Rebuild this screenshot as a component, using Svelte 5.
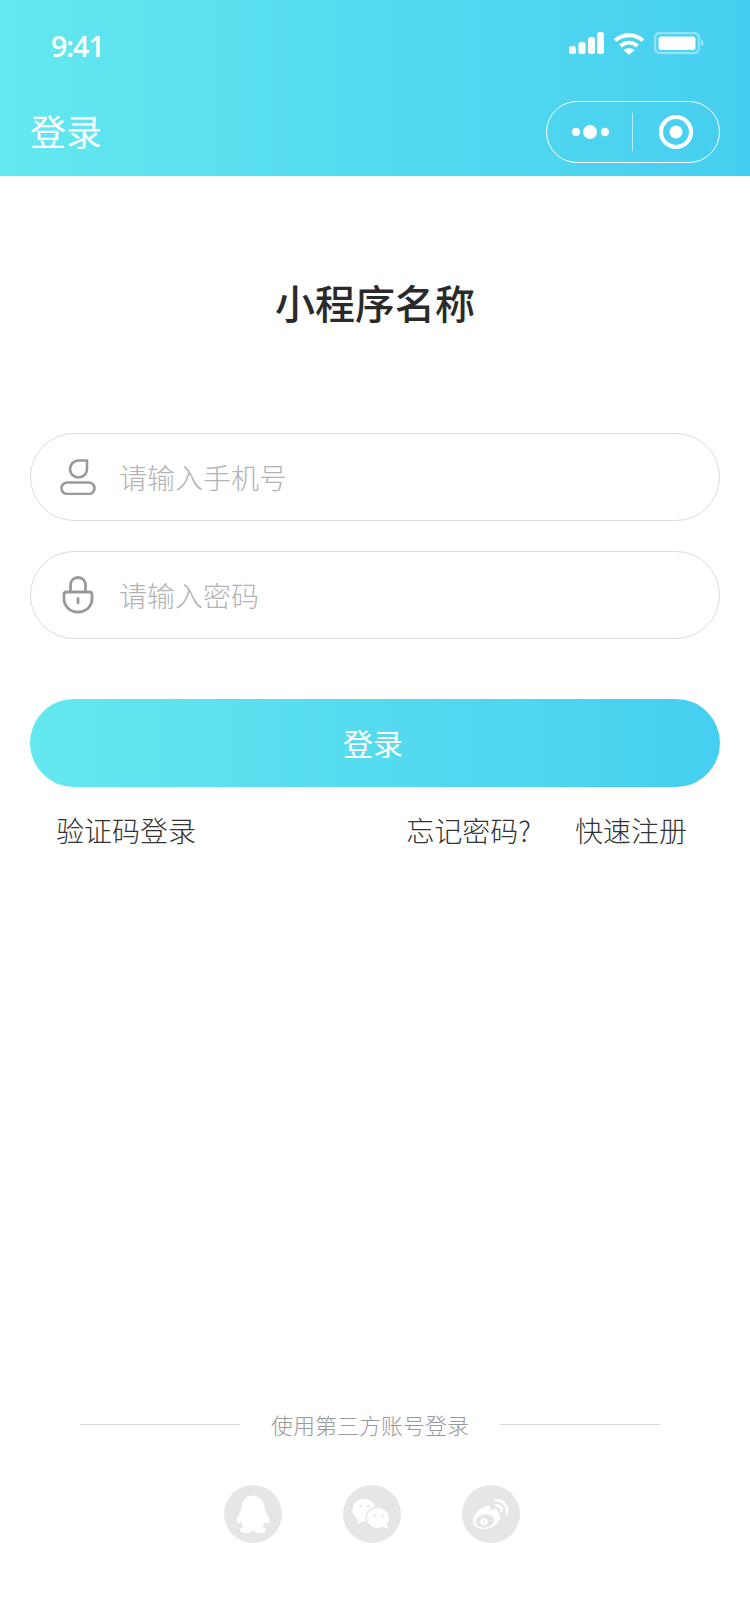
<script>
	let phone = $state('');
	let password = $state('');
</script>

<div class="page">
	<header class="top">
		<div class="status">
			<span class="time">9:41</span>
			<div class="status-icons">
				<svg width="36" height="24" viewBox="0 0 36 24" fill="#fff">
					<rect x="0" y="14" width="7" height="8" rx="2.500" />
					<rect x="9.500" y="10" width="7" height="12" rx="2.500" />
					<rect x="19" y="5" width="7" height="17" rx="2.500" />
					<rect x="28" y="0" width="7" height="22" rx="2.500" />
				</svg>
				<svg width="32" height="24" viewBox="0 0 32 24" fill="none" stroke="#fff" stroke-width="3.800">
					<path d="M2 8.500 C10 1.500 22 1.500 30 8.500" />
					<path d="M7.500 14 C12.500 9.500 19.500 9.500 24.500 14" />
					<path d="M16 23 L10.500 18 C14 15.500 18 15.500 21.500 18 Z" fill="#fff" stroke="none" />
				</svg>
				<svg class="battery" width="50" height="24" viewBox="0 0 50 24">
					<rect x="1" y="1" width="44" height="20" rx="5" fill="none" stroke="#fff" stroke-opacity=".4" stroke-width="2.400" />
					<rect x="4.500" y="4.500" width="37" height="13.500" rx="2.500" fill="#fff" />
					<path d="M47 8 C49 8.500 49.500 9.500 49.500 11 C49.500 12.500 49 13.500 47 14 Z" fill="#fff" fill-opacity=".5" />
				</svg>
			</div>
		</div>
		<div class="nav">
			<span class="nav-title">登录</span>
			<div class="capsule">
				<div class="capsule-side">
					<svg width="40" height="16" viewBox="0 0 40 16" fill="#fff">
						<circle cx="5" cy="8" r="4.200" />
						<circle cx="19" cy="8" r="7" />
						<circle cx="34" cy="8" r="4.200" />
					</svg>
				</div>
				<span class="capsule-line"></span>
				<div class="capsule-side">
					<svg width="36" height="36" viewBox="0 0 36 36">
						<circle cx="18" cy="18" r="15" fill="none" stroke="#fff" stroke-width="4.200" />
						<circle cx="18" cy="18" r="6.500" fill="#fff" />
					</svg>
				</div>
			</div>
		</div>
	</header>

	<main class="content">
		<h1>小程序名称</h1>

		<label class="field">
			<svg width="36" height="36" viewBox="0 0 36 36" fill="none" stroke="#999" stroke-width="2.600">
				<path d="M27 1.500 V10 A8.500 8.500 0 1 1 18.500 1.500 Z" />
				<rect x="1.500" y="23.500" width="33" height="11.500" rx="5.750" />
			</svg>
			<input type="text" placeholder="请输入手机号" bind:value={phone} />
		</label>

		<label class="field second">
			<svg width="36" height="38" viewBox="0 0 36 38" fill="none" stroke="#999" stroke-width="2.800">
				<path d="M10.500 16 V9.500 C10.500 4.500 13.500 1.500 18 1.500 C22.500 1.500 25.500 4.500 25.500 9.500 V16" />
				<path d="M6.500 16 H29.500 C31 16 32 17 32 18.500 V22.500 C32 30.500 26 36 18 36 C10 36 4 30.500 4 22.500 V18.500 C4 17 5 16 6.500 16 Z" />
				<path d="M18 22.500 V27" stroke-linecap="round" />
			</svg>
			<input type="password" placeholder="请输入密码" bind:value={password} />
		</label>

		<button class="submit">登录</button>

		<div class="links">
			<a href="#code">验证码登录</a>
			<div class="links-right">
				<a href="#forget">忘记密码?</a>
				<a href="#register">快速注册</a>
			</div>
		</div>
	</main>

	<footer class="other">
		<div class="other-title">
			<span class="rule"></span>
			<span>使用第三方账号登录</span>
			<span class="rule"></span>
		</div>
		<div class="socials">
			<svg class="social" width="58" height="58" viewBox="0 0 58 58">
				<circle cx="29" cy="29" r="29" fill="#e6e6e6" />
				<path fill="#fff" d="M29 10.500 C36 10.500 40 16 40.500 23 C41 27 44 30 45 34 C45.500 36.500 45 38.500 44 38.500 C43 38.500 42 37.500 41 36 C40.500 38 40 40 38.500 41.500 C40.500 42.500 42 43.500 42 45 C42 47.500 37 48.500 34 48 C31.500 47.500 30 46.500 29 45.500 C28 46.500 26.500 47.500 24 48 C21 48.500 16 47.500 16 45 C16 43.500 17.500 42.500 19.500 41.500 C18 40 17.500 38 17 36 C16 37.500 15 38.500 14 38.500 C13 38.500 12.500 36.500 13 34 C14 30 17 27 17.500 23 C18 16 22 10.500 29 10.500 Z" />
			</svg>
			<svg class="social" width="58" height="58" viewBox="0 0 58 58">
				<circle cx="29" cy="29" r="29" fill="#e6e6e6" />
				<ellipse cx="21" cy="25" rx="11.500" ry="11" fill="#fff" />
				<path fill="#fff" d="M14 32 L15 39 L22 35 Z" />
				<ellipse cx="35" cy="33" rx="12.500" ry="11.500" fill="#e6e6e6" />
				<ellipse cx="35" cy="33" rx="11" ry="10" fill="#fff" />
				<path fill="#fff" d="M39 40 L45 45 L43.500 37 Z" />
				<circle cx="17.500" cy="21" r="1.500" fill="#e6e6e6" />
				<circle cx="25.500" cy="21" r="1.500" fill="#e6e6e6" />
				<circle cx="32" cy="30.500" r="1.300" fill="#e6e6e6" />
				<circle cx="39.500" cy="30.500" r="1.300" fill="#e6e6e6" />
			</svg>
			<svg class="social" width="58" height="58" viewBox="0 0 58 58">
				<circle cx="29" cy="29" r="29" fill="#e6e6e6" />
				<path fill="#fff" d="M11 36 C11 31 15 26 20 23 C24 20.500 28 20 28.500 22 C29 23.500 28.500 24.500 29 25 C32 24 35 24 36 26 C36.500 27 36.500 28 36 29 C38 30 38.500 31.500 38 33.500 C36.500 39 30 44 22 44 C16 44 11 41 11 36 Z" />
				<ellipse cx="23" cy="36" rx="9.500" ry="6.500" fill="#e6e6e6" transform="rotate(-10 23 36)" />
				<ellipse cx="22" cy="36.500" rx="3.800" ry="3.200" fill="#fff" />
				<circle cx="22" cy="36.500" r="1.300" fill="#e6e6e6" />
				<path fill="none" stroke="#fff" stroke-width="2.400" stroke-linecap="round" d="M33 15.500 C40 14 47 20 44.500 29" />
				<path fill="none" stroke="#fff" stroke-width="2.400" stroke-linecap="round" d="M34 20.500 C37 19.500 40.500 22.500 39.500 26" />
			</svg>
		</div>
	</footer>
</div>

<style>
	:global(body) {
		margin: 0;
		background: #fff;
	}

	.page {
		width: 750px;
		height: 1624px;
		display: flex;
		flex-direction: column;
		font-family: "Noto Sans CJK SC", "Noto Sans", sans-serif;
		box-sizing: border-box;
		overflow: hidden;
	}

	.top {
		height: 176px;
		background: linear-gradient(90deg, #63e8ef, #46cef0);
		color: #fff;
		flex-shrink: 0;
	}

	.status {
		height: 88px;
		display: flex;
		justify-content: space-between;
		align-items: flex-start;
		padding: 0 46px 0 51px;
	}

	.time {
		font-family: "Open Sans", sans-serif;
		font-size: 28.500px;
		font-weight: 600;
		letter-spacing: -1px;
		line-height: 40px;
		margin-top: 26px;
	}

	.status-icons {
		display: flex;
		align-items: flex-start;
		gap: 8px;
		margin-top: 32px;
	}

	.battery {
		margin-left: 1px;
	}

	.nav {
		height: 62px;
		margin-top: 13px;
		display: flex;
		justify-content: space-between;
		align-items: center;
		padding: 0 30px;
	}

	.nav-title {
		font-size: 36px;
		line-height: 58px;
		margin-bottom: 4px;
	}

	.capsule {
		width: 174px;
		height: 62px;
		box-sizing: border-box;
		border: 1.500px solid #fff;
		border-radius: 31px;
		display: flex;
		align-items: center;
	}

	.capsule-side {
		flex: 1;
		display: flex;
		justify-content: center;
		align-items: center;
	}

	.capsule-side:first-child {
		flex: 0 0 85px;
		box-sizing: border-box;
		padding-left: 2px;
	}

	.capsule-line {
		width: 1px;
		height: 38px;
		background: rgba(255, 255, 255, 0.6);
	}

	.content {
		padding: 0 30px;
	}

	h1 {
		margin: 98px 0 0;
		font-size: 40px;
		font-weight: 500;
		line-height: 56px;
		color: #2a2a2a;
		text-align: center;
	}

	.field {
		height: 88px;
		box-sizing: border-box;
		margin-top: 103px;
		border: 1px solid #dcdcdc;
		border-radius: 44px;
		display: flex;
		align-items: center;
		gap: 23px;
		padding-left: 29px;
	}

	.field.second {
		margin-top: 30px;
	}

	.field input {
		flex: 1;
		min-width: 0;
		border: 0;
		outline: 0;
		padding: 0;
		background: transparent;
		font: inherit;
		font-size: 28px;
		font-weight: 300;
		color: #333;
	}

	.field input::placeholder {
		color: #b3b3b3;
		opacity: 1;
	}

	.submit {
		display: block;
		width: 100%;
		height: 88px;
		margin-top: 60px;
		padding: 0 4px 3px 0;
		border: 0;
		border-radius: 44px;
		background: linear-gradient(90deg, #63e8ef, #46cef0);
		color: #fff;
		font: inherit;
		font-size: 30px;
	}

	.links {
		display: flex;
		justify-content: space-between;
		margin-top: 23px;
		padding: 0 33px 0 26px;
		font-size: 28px;
		font-weight: 300;
		line-height: 40px;
	}

	.links a {
		color: #333;
		text-decoration: none;
	}

	.links-right {
		display: flex;
		gap: 44px;
	}

	.other {
		margin-top: auto;
		padding: 0 10px 81px 0;
	}

	.other-title {
		display: flex;
		justify-content: center;
		align-items: center;
		gap: 31px;
		font-size: 22px;
		font-weight: 300;
		line-height: 32px;
		color: #999;
	}

	.rule {
		width: 160px;
		height: 1px;
		background: #d9d9d9;
	}

	.socials {
		display: flex;
		justify-content: center;
		gap: 61px;
		margin-top: 45px;
		padding-left: 4px;
	}

	.social {
		display: block;
	}
</style>
